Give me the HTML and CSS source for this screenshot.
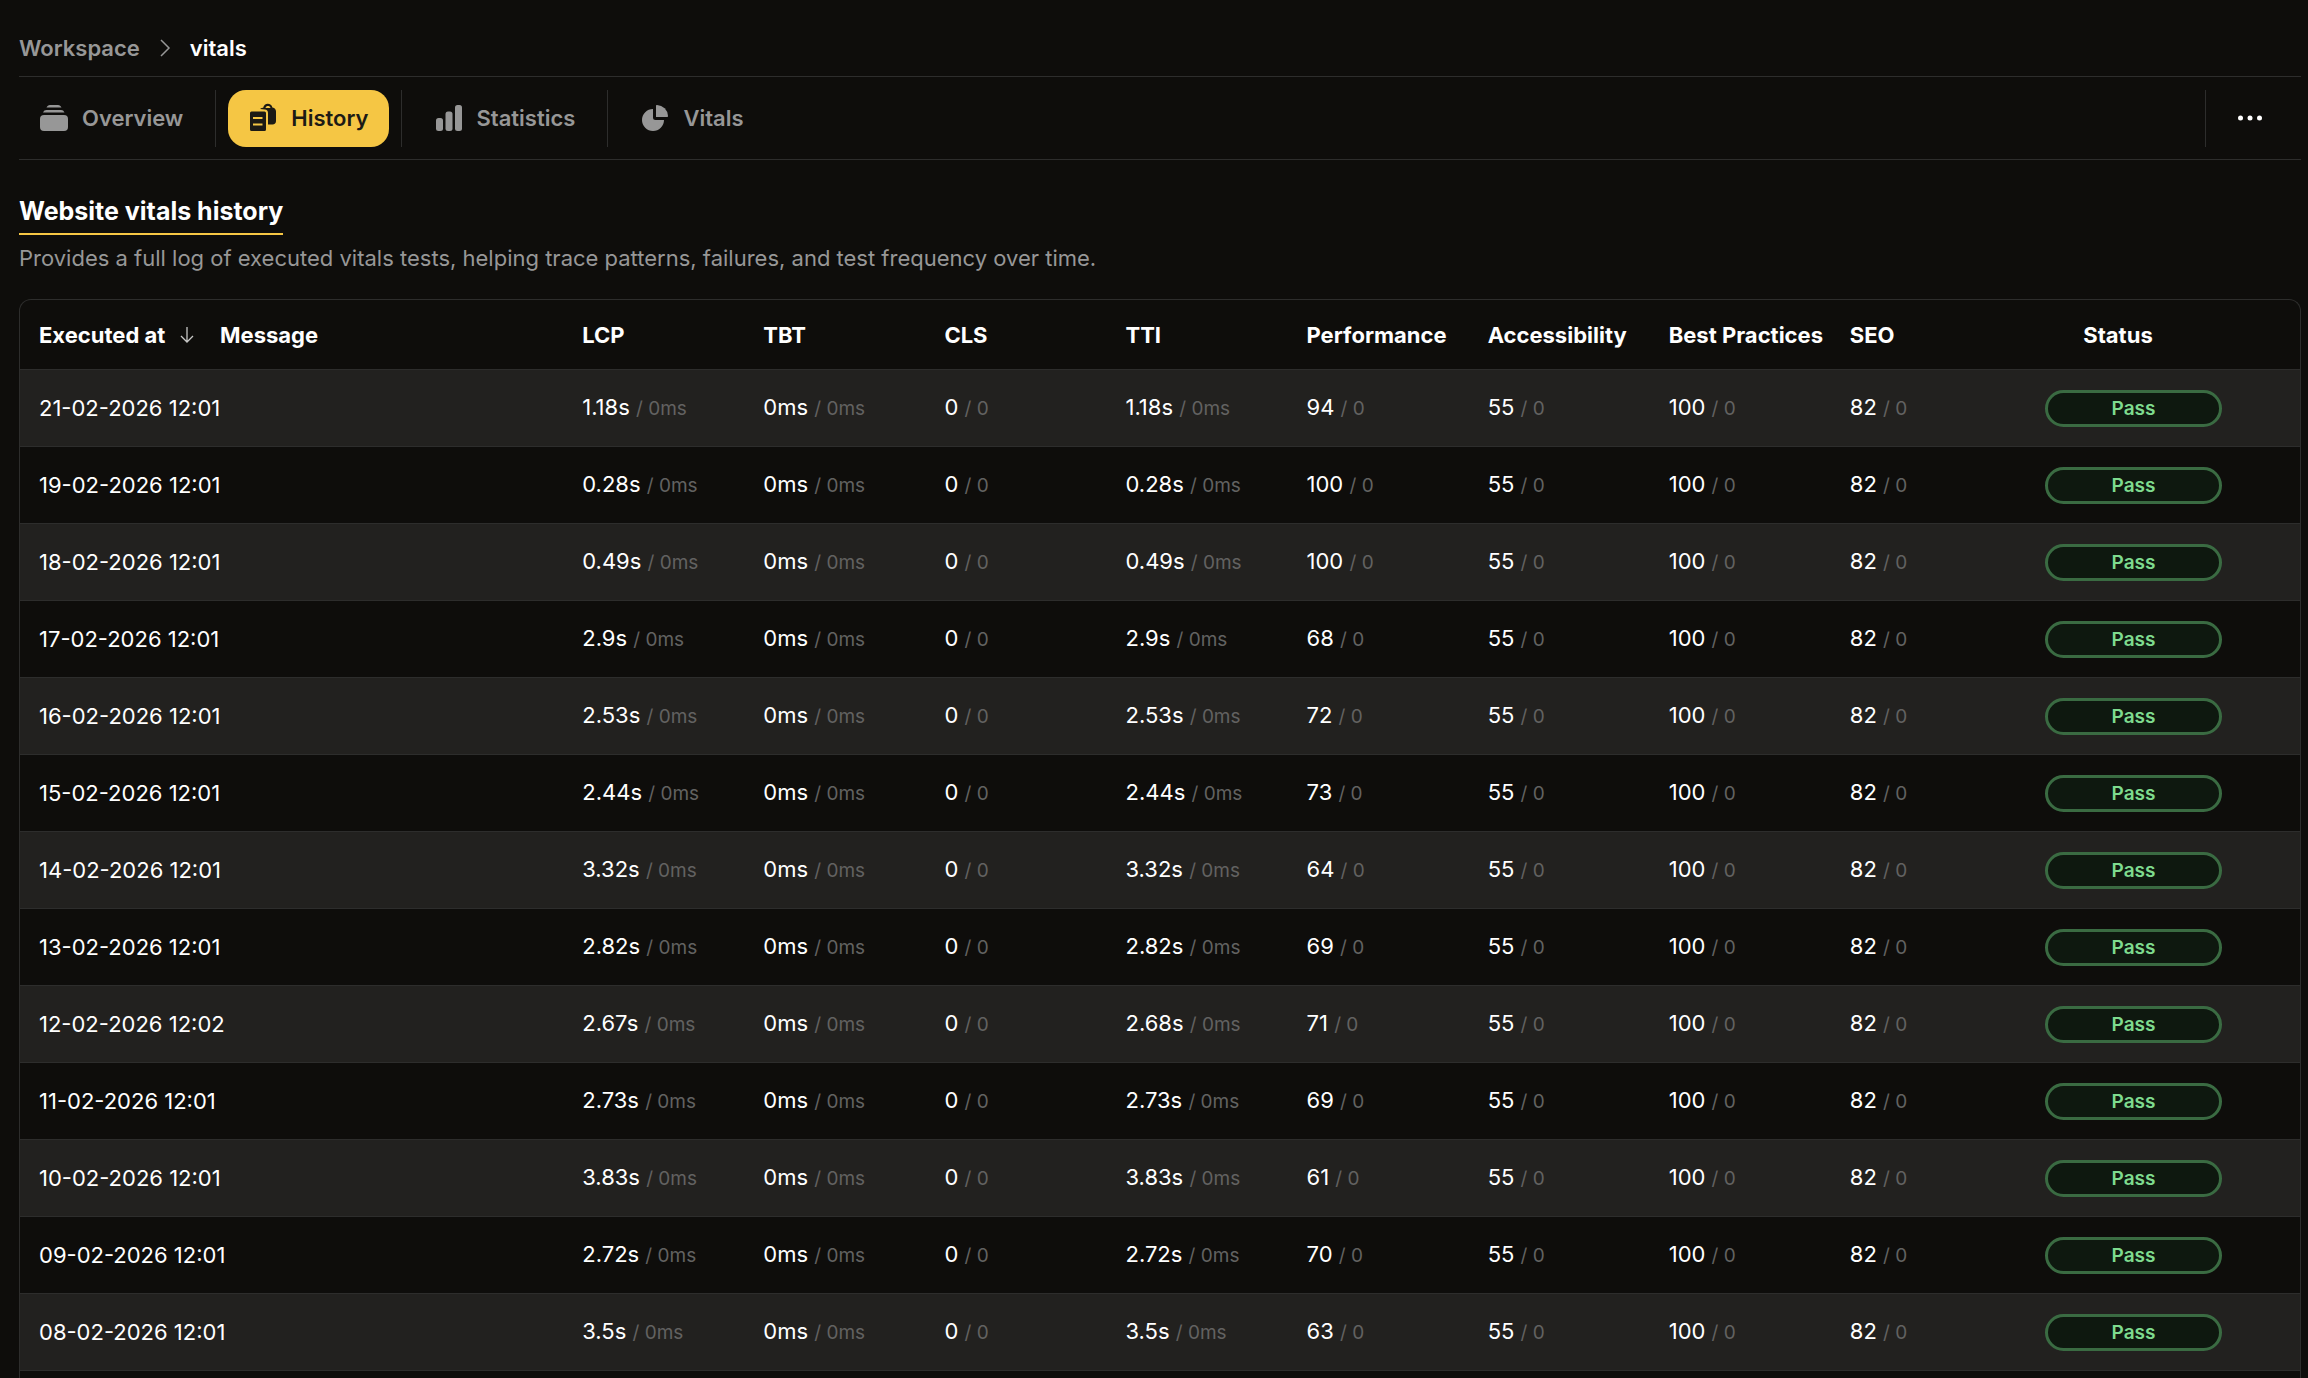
FILE: index.html
```html
<!DOCTYPE html>
<html lang="en">
	<head>
		<meta charset="UTF-8">
		<meta name="viewport" content="width=device-width,initial-scale=1">
		<title>vitals - History</title>
		<link rel="stylesheet" href="styles.css">
	</head>
	<body>
		<div class="page">
			<nav class="breadcrumb" aria-label="Breadcrumb">
				<a class="breadcrumb__link" href="#">Workspace</a>
				<svg class="breadcrumb__arrow" viewBox="0 0 12 20" aria-hidden="true"><path d="M2 2l8 8-8 8"/></svg>
				<span class="breadcrumb__current">vitals</span>
			</nav>
			<div class="toolbar">
				<nav class="tabs">
					<a class="tab" href="#">
						<svg class="tab__icon" viewBox="0 0 30 30" aria-hidden="true">
							<path d="M7.500 4.500C8.300 2.900 9.300 2 11 2h8c1.700 0 2.700.9 3.500 2.500zM4 9.500C4.800 7.800 5.800 7 7.500 7h14.500c1.700 0 2.700.8 3.500 2.500z"/>
							<rect x="1" y="12" width="28" height="16" rx="4"/>
						</svg>
						Overview
					</a>
					<span class="divider"></span>
					<a class="tab is-active" href="#" aria-current="page">
						<svg class="tab__icon" viewBox="0 0 30 30" aria-hidden="true">
							<path fill-rule="evenodd" d="M3.500 8.500h13A1.500 1.500 0 0 1 18 10v16.500a1.500 1.500 0 0 1-1.500 1.500h-13A1.500 1.500 0 0 1 2 26.500V10a1.500 1.500 0 0 1 1.500-1.500zM5 14v2h9.500v-2zm0 6.500v2h9.500v-2z"/>
							<path fill-rule="evenodd" d="M12 6c1-.8 2-1.300 3.200-1.300C15.800 2 17.500.8 19.800.8s4 1.200 4.600 3.600C27 5 28 6.500 28 8.500V18c0 2-1.300 3.500-3.500 3.500H20V10c0-2-1.200-3.500-3-3.500zM17.500 5h5c-.4-1.400-1.200-2-2.500-2s-2.100.6-2.500 2z"/>
						</svg>
						History
					</a>
					<span class="divider"></span>
					<a class="tab" href="#">
						<svg class="tab__icon" viewBox="0 0 30 30" aria-hidden="true">
							<rect x="2" y="15" width="7" height="13" rx="2.500"/>
							<rect x="11.500" y="8.500" width="7" height="19.500" rx="2.500"/>
							<rect x="21" y="2" width="7" height="26" rx="2.500"/>
						</svg>
						Statistics
					</a>
					<span class="divider"></span>
					<a class="tab" href="#">
						<svg class="tab__icon" viewBox="0 0 30 30" aria-hidden="true">
							<path d="M13 6v8.500a2.500 2.500 0 0 0 2.500 2.500H24a11 11 0 1 1-11-11z"/>
							<path d="M17 2a11.500 11.500 0 0 1 11 11c0 .6-.4 1-1 1H16V3c0-.6.4-1 1-1z"/>
						</svg>
						Vitals
					</a>
				</nav>
				<button class="more" type="button" aria-label="More actions">
					<svg class="more__icon" viewBox="0 0 24 6" aria-hidden="true"><circle cx="2.500" cy="3" r="2.500"/><circle cx="12" cy="3" r="2.500"/><circle cx="21.500" cy="3" r="2.500"/></svg>
				</button>
			</div>
			<h1 class="title">Website vitals history</h1>
			<p class="lead">Provides a full log of executed vitals tests, helping trace patterns, failures, and test frequency over time.</p>
			<div class="panel">
				<table class="history">
					<colgroup>
						<col span="11">
						<col class="history__status">
					</colgroup>
					<thead>
						<tr>
							<th aria-sort="descending">
								<button class="sort" type="button">Executed at
									<svg class="sort__icon" viewBox="0 0 14 16" aria-hidden="true"><path d="M7 0v15M1 9l6 6 6-6"/></svg>
								</button>
							</th>
							<th colspan="2">Message</th>
							<th>LCP</th>
							<th>TBT</th>
							<th>CLS</th>
							<th>TTI</th>
							<th>Performance</th>
							<th>Accessibility</th>
							<th>Best Practices</th>
							<th>SEO</th>
							<th class="status-head">Status</th>
						</tr>
					</thead>
					<tbody>
						<tr>
							<td>21-02-2026 12:01</td><td colspan="2"></td>
							<td>1.18s <small>/ 0ms</small></td><td>0ms <small>/ 0ms</small></td><td>0 <small>/ 0</small></td><td>1.18s <small>/ 0ms</small></td>
							<td>94 <small>/ 0</small></td><td>55 <small>/ 0</small></td><td>100 <small>/ 0</small></td><td>82 <small>/ 0</small></td>
							<td class="status"><span class="pill">Pass</span></td>
						</tr>
						<tr>
							<td>19-02-2026 12:01</td><td colspan="2"></td>
							<td>0.28s <small>/ 0ms</small></td><td>0ms <small>/ 0ms</small></td><td>0 <small>/ 0</small></td><td>0.28s <small>/ 0ms</small></td>
							<td>100 <small>/ 0</small></td><td>55 <small>/ 0</small></td><td>100 <small>/ 0</small></td><td>82 <small>/ 0</small></td>
							<td class="status"><span class="pill">Pass</span></td>
						</tr>
						<tr>
							<td>18-02-2026 12:01</td><td colspan="2"></td>
							<td>0.49s <small>/ 0ms</small></td><td>0ms <small>/ 0ms</small></td><td>0 <small>/ 0</small></td><td>0.49s <small>/ 0ms</small></td>
							<td>100 <small>/ 0</small></td><td>55 <small>/ 0</small></td><td>100 <small>/ 0</small></td><td>82 <small>/ 0</small></td>
							<td class="status"><span class="pill">Pass</span></td>
						</tr>
						<tr>
							<td>17-02-2026 12:01</td><td colspan="2"></td>
							<td>2.9s <small>/ 0ms</small></td><td>0ms <small>/ 0ms</small></td><td>0 <small>/ 0</small></td><td>2.9s <small>/ 0ms</small></td>
							<td>68 <small>/ 0</small></td><td>55 <small>/ 0</small></td><td>100 <small>/ 0</small></td><td>82 <small>/ 0</small></td>
							<td class="status"><span class="pill">Pass</span></td>
						</tr>
						<tr>
							<td>16-02-2026 12:01</td><td colspan="2"></td>
							<td>2.53s <small>/ 0ms</small></td><td>0ms <small>/ 0ms</small></td><td>0 <small>/ 0</small></td><td>2.53s <small>/ 0ms</small></td>
							<td>72 <small>/ 0</small></td><td>55 <small>/ 0</small></td><td>100 <small>/ 0</small></td><td>82 <small>/ 0</small></td>
							<td class="status"><span class="pill">Pass</span></td>
						</tr>
						<tr>
							<td>15-02-2026 12:01</td><td colspan="2"></td>
							<td>2.44s <small>/ 0ms</small></td><td>0ms <small>/ 0ms</small></td><td>0 <small>/ 0</small></td><td>2.44s <small>/ 0ms</small></td>
							<td>73 <small>/ 0</small></td><td>55 <small>/ 0</small></td><td>100 <small>/ 0</small></td><td>82 <small>/ 0</small></td>
							<td class="status"><span class="pill">Pass</span></td>
						</tr>
						<tr>
							<td>14-02-2026 12:01</td><td colspan="2"></td>
							<td>3.32s <small>/ 0ms</small></td><td>0ms <small>/ 0ms</small></td><td>0 <small>/ 0</small></td><td>3.32s <small>/ 0ms</small></td>
							<td>64 <small>/ 0</small></td><td>55 <small>/ 0</small></td><td>100 <small>/ 0</small></td><td>82 <small>/ 0</small></td>
							<td class="status"><span class="pill">Pass</span></td>
						</tr>
						<tr>
							<td>13-02-2026 12:01</td><td colspan="2"></td>
							<td>2.82s <small>/ 0ms</small></td><td>0ms <small>/ 0ms</small></td><td>0 <small>/ 0</small></td><td>2.82s <small>/ 0ms</small></td>
							<td>69 <small>/ 0</small></td><td>55 <small>/ 0</small></td><td>100 <small>/ 0</small></td><td>82 <small>/ 0</small></td>
							<td class="status"><span class="pill">Pass</span></td>
						</tr>
						<tr>
							<td>12-02-2026 12:02</td><td colspan="2"></td>
							<td>2.67s <small>/ 0ms</small></td><td>0ms <small>/ 0ms</small></td><td>0 <small>/ 0</small></td><td>2.68s <small>/ 0ms</small></td>
							<td>71 <small>/ 0</small></td><td>55 <small>/ 0</small></td><td>100 <small>/ 0</small></td><td>82 <small>/ 0</small></td>
							<td class="status"><span class="pill">Pass</span></td>
						</tr>
						<tr>
							<td>11-02-2026 12:01</td><td colspan="2"></td>
							<td>2.73s <small>/ 0ms</small></td><td>0ms <small>/ 0ms</small></td><td>0 <small>/ 0</small></td><td>2.73s <small>/ 0ms</small></td>
							<td>69 <small>/ 0</small></td><td>55 <small>/ 0</small></td><td>100 <small>/ 0</small></td><td>82 <small>/ 0</small></td>
							<td class="status"><span class="pill">Pass</span></td>
						</tr>
						<tr>
							<td>10-02-2026 12:01</td><td colspan="2"></td>
							<td>3.83s <small>/ 0ms</small></td><td>0ms <small>/ 0ms</small></td><td>0 <small>/ 0</small></td><td>3.83s <small>/ 0ms</small></td>
							<td>61 <small>/ 0</small></td><td>55 <small>/ 0</small></td><td>100 <small>/ 0</small></td><td>82 <small>/ 0</small></td>
							<td class="status"><span class="pill">Pass</span></td>
						</tr>
						<tr>
							<td>09-02-2026 12:01</td><td colspan="2"></td>
							<td>2.72s <small>/ 0ms</small></td><td>0ms <small>/ 0ms</small></td><td>0 <small>/ 0</small></td><td>2.72s <small>/ 0ms</small></td>
							<td>70 <small>/ 0</small></td><td>55 <small>/ 0</small></td><td>100 <small>/ 0</small></td><td>82 <small>/ 0</small></td>
							<td class="status"><span class="pill">Pass</span></td>
						</tr>
						<tr>
							<td>08-02-2026 12:01</td><td colspan="2"></td>
							<td>3.5s <small>/ 0ms</small></td><td>0ms <small>/ 0ms</small></td><td>0 <small>/ 0</small></td><td>3.5s <small>/ 0ms</small></td>
							<td>63 <small>/ 0</small></td><td>55 <small>/ 0</small></td><td>100 <small>/ 0</small></td><td>82 <small>/ 0</small></td>
							<td class="status"><span class="pill">Pass</span></td>
						</tr>
					</tbody>
				</table>
			</div>
		</div>
	</body>
</html>
```
FILE: styles.css
```css
*
{
	box-sizing: border-box;
}

body
{
	margin: 0;
	background-color: #0e0d0b;
	color: #fff;
	font-family: Inter, sans-serif;
	font-size: 22px;
	line-height: 28px;
}

.page
{
	display: flex;
	flex-direction: column;
	min-height: 100vh;
	padding: 0 7px 0 19px;
}

/* breadcrumb */
.breadcrumb
{
	display: flex;
	align-items: center;
	gap: 19px;
	padding: 34px 0 14px;
	font-weight: 600;
}

.breadcrumb__link
{
	color: #979797;
	text-decoration: none;
}

.breadcrumb__arrow
{
	width: 12px;
	height: 20px;
	fill: none;
	stroke: #979797;
	stroke-width: 1.5;
}

/* tabs */
.toolbar
{
	display: flex;
	justify-content: space-between;
	padding: 13px 0 12px;
	border-top: 1px solid #2d2d2c;
	border-bottom: 1px solid #2d2d2c;
}

.tabs
{
	display: flex;
	gap: 12px;
}

.tab
{
	display: flex;
	align-items: center;
	gap: 13px;
	height: 57px;
	padding: 0 20px 2px;
	border-radius: 18px;
	color: #979797;
	font-weight: 600;
	text-decoration: none;
}

.tab.is-active
{
	background-color: #f5c644;
	color: #1c1a15;
}

.tab__icon
{
	width: 30px;
	height: 30px;
	fill: currentColor;
}

.divider
{
	width: 1px;
	background-color: #2d2d2c;
}

.more
{
	display: flex;
	align-items: center;
	padding: 0 39px 2px 32px;
	border: 0;
	border-left: 1px solid #2d2d2c;
	background: none;
}

.more__icon
{
	width: 24px;
	height: 6px;
	fill: #fff;
}

/* heading */
.title
{
	align-self: flex-start;
	margin: 35px 0 0;
	padding-bottom: 6px;
	border-bottom: 2px solid #f5c644;
	font-size: 25px;
	font-weight: 700;
	line-height: 32px;
}

.lead
{
	margin: 9px 0 27px;
	color: #979797;
}

/* table */
.panel
{
	flex: 1;
	overflow: hidden;
	border: 1px solid #2d2d2c;
	border-bottom: 0;
	border-radius: 12px 12px 0 0;
}

.history
{
	width: 100%;
	table-layout: fixed;
	border-collapse: separate;
	border-spacing: 0;
	white-space: nowrap;
}

.history__status
{
	width: 288px;
}

.history th,
.history td
{
	padding: 0 0 0 19px;
	border-bottom: 1px solid #2d2d2c;
	text-align: left;
}

.history th
{
	height: 70px;
	font-weight: 700;
}

.history td
{
	height: 77px;
}

.history tbody tr:nth-child(odd)
{
	background-color: #22211f;
}

.history small
{
	color: #626261;
	font-size: 19px;
}

.sort
{
	display: flex;
	align-items: center;
	gap: 15px;
	padding: 0;
	border: 0;
	background: none;
	color: inherit;
	font: inherit;
}

.sort__icon
{
	width: 14px;
	height: 16px;
	fill: none;
	stroke: #c8c8c7;
	stroke-width: 1.3;
}

.history .status-head
{
	padding: 0 76px 0 0;
	text-align: center;
}

.history .status
{
	padding-left: 33px;
}

.pill
{
	display: block;
	width: 177px;
	border: 3px solid #3a6b42;
	border-radius: 19px;
	background-color: #0e180f;
	color: #7edb8e;
	font-size: 19px;
	font-weight: 600;
	line-height: 31px;
	text-align: center;
}
```
